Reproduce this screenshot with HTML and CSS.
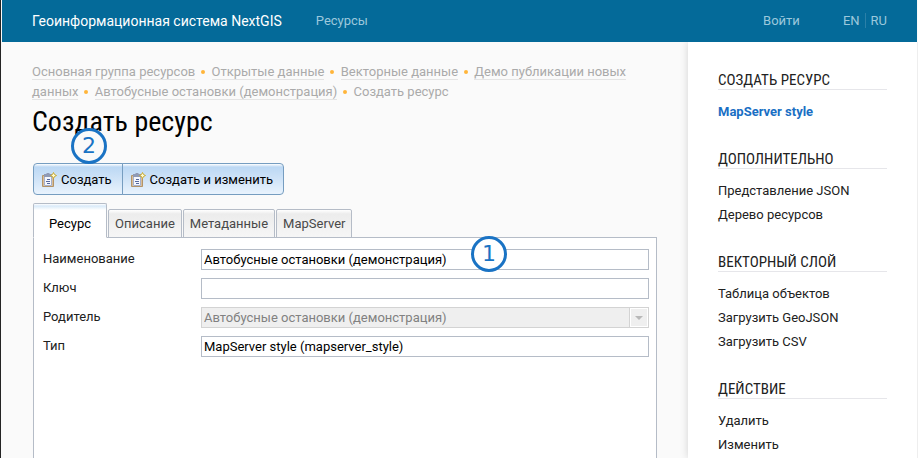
FILE: index.html
```html
<!DOCTYPE html>
<html lang="ru">
<head>
<meta charset="utf-8">
<title>Создать ресурс</title>
<link rel="stylesheet" href="styles.css">
</head>
<body>
<svg class="sprite" aria-hidden="true">
  <symbol id="icon-create" viewBox="0 0 16 16">
    <path d="M0.500 3.500h11v11h-11z" fill="#d9bd96" stroke="#b39468"/>
    <path d="M2 4h8v10h-8z" fill="#f4f7fd"/>
    <path d="M2.500 5v8.500h7v-8.500" fill="none" stroke="#a5b0cc"/>
    <path d="M2 2h2l1-1h2l1 1h2v3h-8z" fill="#8f9ab5"/>
    <path d="M5 7.500h3M4 9.500h4M5 11.500h3" stroke="#5468a0"/>
    <path d="M11.500 0.500l1 2 2 1-2 1-1 2-1-2-2-1 2-1z" fill="#fffbd0" stroke="#c9aa32"/>
  </symbol>
</svg>
<div class="page">
  <header class="header">
    <a class="brand" href="#">Геоинформационная система NextGIS</a>
    <a class="header-link" href="#">Ресурсы</a>
    <nav class="user-nav">
      <a class="header-link" href="#">Войти</a>
      <span class="langs"><a class="header-link" href="#">EN</a><a class="header-link" href="#">RU</a></span>
    </nav>
  </header>
  <div class="columns">
    <main class="main">
      <nav class="crumbs">
        <a href="#">Основная группа ресурсов</a><i class="dot"></i>
        <a href="#">Открытые данные</a><i class="dot"></i>
        <a href="#">Векторные данные</a><i class="dot"></i>
        <a href="#">Демо публикации новых данных</a><i class="dot"></i>
        <a href="#">Автобусные остановки (демонстрация)</a><i class="dot"></i>
        <span>Создать ресурс</span>
      </nav>
      <h1 class="title">Создать ресурс</h1>
      <form class="widget">
        <div class="toolbar">
          <button type="button"><svg class="icon"><use href="#icon-create"/></svg>Создать</button>
          <button type="button"><svg class="icon"><use href="#icon-create"/></svg>Создать и изменить</button>
          <span class="badge badge-create">2</span>
        </div>
        <div class="tabs" role="tablist">
          <button type="button" class="tab active" role="tab" aria-selected="true">Ресурс</button>
          <button type="button" class="tab" role="tab">Описание</button>
          <button type="button" class="tab" role="tab">Метаданные</button>
          <button type="button" class="tab" role="tab">MapServer</button>
        </div>
        <div class="panel">
          <label for="name">Наименование</label>
          <div class="field"><input id="name" type="text" value="Автобусные остановки (демонстрация)"><span class="badge badge-name">1</span></div>
          <label for="key">Ключ</label>
          <div class="field"><input id="key" type="text"></div>
          <label for="parent">Родитель</label>
          <div class="field"><select id="parent" disabled><option>Автобусные остановки (демонстрация)</option></select><span class="arrow"></span></div>
          <label for="type">Тип</label>
          <div class="field"><input id="type" type="text" value="MapServer style (mapserver_style)"></div>
        </div>
      </form>
    </main>
    <aside class="sidebar">
      <section><h2>Создать ресурс</h2><ul><li><a class="current" href="#">MapServer style</a></li></ul></section>
      <section><h2>Дополнительно</h2><ul><li><a href="#">Представление JSON</a></li><li><a href="#">Дерево ресурсов</a></li></ul></section>
      <section><h2>Векторный слой</h2><ul><li><a href="#">Таблица объектов</a></li><li><a href="#">Загрузить GeoJSON</a></li><li><a href="#">Загрузить CSV</a></li></ul></section>
      <section><h2>Действие</h2><ul><li><a href="#">Удалить</a></li><li><a href="#">Изменить</a></li></ul></section>
    </aside>
  </div>
</div>
</body>
</html>
```
FILE: styles.css
```css
* { box-sizing: border-box; }
html, body { height: 100%; }
body {
  margin: 0;
  overflow: hidden;
  background: #fafafa;
  color: #212121;
  font: 13px/20px Roboto, "Liberation Sans", sans-serif;
}
a { color: inherit; text-decoration: none; }
button, input, select { font: inherit; color: #000; }
.sprite { display: none; }
.page {
  height: 100%;
  display: flex;
  flex-direction: column;
  border-left: 1px solid #242424;
  padding-left: 1px;
}
.header {
  flex: none;
  display: flex;
  align-items: center;
  height: 42px;
  margin-right: 1px;
  padding: 0 30px;
  background: #046a99;
}
.brand { margin-right: 34px; color: #fff; font-size: 14px; }
.header-link { color: #9cc8dc; }
.user-nav { display: flex; gap: 43px; margin-left: auto; }
.langs a + a { margin-left: 5px; padding-left: 5px; border-left: 1px solid #2b80a8; }
.columns { flex: 1; display: flex; min-height: 0; }
.main {
  flex: 1;
  display: flex;
  flex-direction: column;
  min-width: 0;
  padding: 20px 31px 0 30px;
}
.crumbs { color: #aaa; }
.crumbs a { border-bottom: 1px solid #e4e4e4; }
.dot {
  display: inline-block;
  width: 4px;
  height: 4px;
  margin: 0 3px 2px 6px;
  border-radius: 50%;
  background: #ffb53a;
}
.title {
  margin: 0 0 21px;
  color: #000;
  font: 28px/40px "Roboto Condensed", Roboto, sans-serif;
}
.widget { flex: 1; display: flex; flex-direction: column; margin-left: 1px; }
.toolbar { position: relative; display: flex; align-self: flex-start; margin-bottom: 8px; }
.toolbar button {
  display: flex;
  align-items: center;
  height: 32px;
  padding: 2px 10px 0 8px;
  border: 1px solid #769dc0;
  background: linear-gradient(#fff 0, #bcd8f4 3px, #cfe3f7 50%, #e9f3fd 100%);
}
.toolbar button:first-child { border-radius: 4px 0 0 4px; }
.toolbar button + button { margin-left: -1px; border-radius: 0 4px 4px 0; }
.icon { width: 16px; height: 16px; margin-right: 3px; }
.badge {
  position: absolute;
  width: 36px;
  height: 36px;
  border: 3px solid #1a73c4;
  border-radius: 50%;
  background: #fff;
  color: #1a73c4;
  font: 22px/30px "DejaVu Sans", sans-serif;
  text-align: center;
}
.badge-create { left: 38px; top: -35px; background: #fafafa; }
.badge-name { right: 142px; top: -13px; }
.tabs { display: flex; align-items: flex-end; gap: 1px; }
.tab {
  height: 29px;
  padding: 0 6px;
  border: 1px solid #b5bcc7;
  border-radius: 2px 2px 0 0;
  background: linear-gradient(#fff, #ececec 4px, #f6f6f6);
  color: #494949;
}
.tab.active {
  position: relative;
  height: 35px;
  padding: 6px 15px 0;
  border-bottom-color: #fff;
  background: linear-gradient(#fff 0, #d9eaf9 2px, #fff 6px);
  color: #000;
}
.panel {
  flex: 1;
  display: grid;
  grid-template-columns: 158px 1fr;
  grid-auto-rows: 21px;
  row-gap: 8px;
  margin-top: -1px;
  padding: 11px 7px 0 9px;
  border: 1px solid #b5bcc7;
  border-bottom: 0;
  background: #fff;
}
.field { position: relative; display: flex; }
.field input, .field select {
  width: 100%;
  height: 21px;
  padding: 0 2px;
  border: 1px solid #b5bcc7;
  border-radius: 0;
  background: #fff;
}
.field select { appearance: none; background: #efefef; border-color: #d3d3d3; color: #818181; opacity: 1; }
.arrow {
  position: absolute;
  inset: 1px 1px 1px auto;
  display: flex;
  align-items: center;
  justify-content: center;
  width: 18px;
  border: 1px solid #fff;
  background: #efefef;
  box-shadow: -1px 0 #d3d3d3;
}
.arrow::after { content: ""; border: 4px solid transparent; border-top-color: #b8b8b8; border-bottom: 0; }
.sidebar {
  flex: none;
  width: 230px;
  padding: 27px 30px 0;
  border-right: 1px solid #eee;
  background: #fff;
  box-shadow: 0 0 8px rgba(0, 0, 0, 0.16);
  clip-path: inset(0 0 0 -10px);
}
.sidebar section { margin-bottom: 24px; }
.sidebar h2 {
  margin: 0 0 10px;
  padding-top: 2px;
  border-bottom: 1px solid #e6e6ea;
  font: 15px/18px "Roboto Condensed", Roboto, sans-serif;
  text-transform: uppercase;
}
.sidebar ul { margin: 0; padding: 0; list-style: none; }
.sidebar li { line-height: 24px; }
.current { color: #1a6fc4; font-weight: 700; }
```
